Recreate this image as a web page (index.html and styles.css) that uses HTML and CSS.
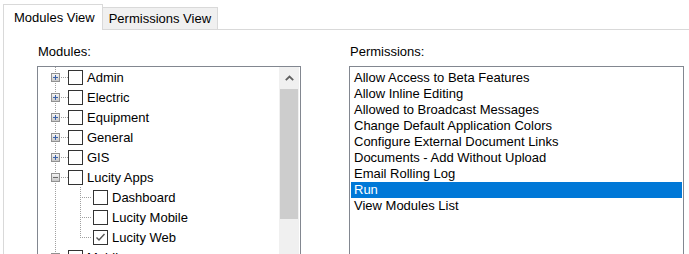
FILE: index.html
```html
<!DOCTYPE html>
<html lang="en">
<head>
  <meta charset="UTF-8">
  <title>Security Settings</title>
  <link rel="stylesheet" href="styles.css">
</head>
<body>
  <div class="tabs">
    <div class="tab active">Modules View</div>
    <div class="tab">Permissions View</div>
  </div>
  <div class="panel">
    <div class="column modules">
      <label class="caption">Modules:</label>
      <div class="box tree-box">
        <ul class="tree">
          <li class="node"><span class="gut"><span class="exp plus"></span></span><span class="dash"></span><span class="chk"></span><span class="txt">Admin</span></li>
          <li class="node"><span class="gut"><span class="exp plus"></span></span><span class="dash"></span><span class="chk"></span><span class="txt">Electric</span></li>
          <li class="node"><span class="gut"><span class="exp plus"></span></span><span class="dash"></span><span class="chk"></span><span class="txt">Equipment</span></li>
          <li class="node"><span class="gut"><span class="exp plus"></span></span><span class="dash"></span><span class="chk"></span><span class="txt">General</span></li>
          <li class="node"><span class="gut"><span class="exp plus"></span></span><span class="dash"></span><span class="chk"></span><span class="txt">GIS</span></li>
          <li class="node"><span class="gut"><span class="exp minus"></span></span><span class="dash"></span><span class="chk"></span><span class="txt">Lucity Apps</span></li>
          <li class="node child"><span class="gut"></span><span class="branch"></span><span class="chk"></span><span class="txt">Dashboard</span></li>
          <li class="node child"><span class="gut"></span><span class="branch"></span><span class="chk"></span><span class="txt">Lucity Mobile</span></li>
          <li class="node child"><span class="gut"></span><span class="branch last"></span><span class="chk checked"><svg width="13" height="13" viewBox="0 0 13 13"><path d="M2.5 6.5 L5 9 L10.5 3" fill="none" stroke="#555" stroke-width="1.4"/></svg></span><span class="txt">Lucity Web</span></li>
          <li class="node"><span class="gut"><span class="exp plus"></span></span><span class="dash"></span><span class="chk"></span><span class="txt">Mobile</span></li>
        </ul>
        <div class="scrollbar">
          <div class="arrow"><svg width="9" height="6" viewBox="0 0 9 6"><path d="M0.8 5.2 L4.5 1.5 L8.2 5.2" fill="none" stroke="#606060" stroke-width="1.8"/></svg></div>
          <div class="thumb"></div>
        </div>
      </div>
    </div>
    <div class="column permissions">
      <label class="caption">Permissions:</label>
      <ul class="box list">
        <li>Allow Access to Beta Features</li>
        <li>Allow Inline Editing</li>
        <li>Allowed to Broadcast Messages</li>
        <li>Change Default Application Colors</li>
        <li>Configure External Document Links</li>
        <li>Documents - Add Without Upload</li>
        <li>Email Rolling Log</li>
        <li class="selected">Run</li>
        <li>View Modules List</li>
      </ul>
    </div>
  </div>
</body>
</html>
```

FILE: styles.css
```css
* {
  box-sizing: border-box;
  margin: 0;
  padding: 0;
}
html, body {
  height: 100%;
  overflow: hidden;
}
body {
  background: white;
  font-family: "Liberation Sans", Arial, sans-serif;
  font-size: 13px;
  color: #000;
}
ul {
  list-style: none;
}
.tabs {
  display: flex;
  align-items: flex-end;
  padding: 3px 0 0 3px;
  height: 29px;
}
.tab {
  height: 22px;
  line-height: 21px;
  padding: 0 6px;
  background: #f0f0f0;
  border: 1px solid #d9d9d9;
  border-left: none;
  border-bottom: none;
}
.tab.active {
  height: 26px;
  line-height: 25px;
  padding: 0 7px 0 10px;
  background: white;
  border-left: 1px solid #d9d9d9;
  margin-bottom: -1px;
  position: relative;
  z-index: 1;
}
.panel {
  margin-left: 3px;
  border-top: 1px solid #d9d9d9;
  border-left: 1px solid #d9d9d9;
  height: 230px;
  display: flex;
  gap: 48px;
  padding: 14px 0 0 33px;
}
.column {
  display: flex;
  flex-direction: column;
}
.caption {
  line-height: 16px;
  padding-left: 1px;
  margin-bottom: 6px;
}
.box {
  border: 1px solid #828790;
  background: white;
  height: 200px;
}
.modules .box {
  width: 264px;
}
.permissions .box {
  width: 335px;
}
.tree-box {
  display: flex;
}
.tree {
  flex: 1;
  padding-left: 12px;
}
.node {
  display: flex;
  align-items: center;
  height: 20px;
  white-space: nowrap;
}
.gut {
  width: 11px;
  height: 20px;
  display: flex;
  align-items: center;
  justify-content: center;
  background: repeating-linear-gradient(to bottom, #a0a0a0 0 1px, transparent 1px 2px) no-repeat 5px 0 / 1px 100%;
}
.exp {
  width: 9px;
  height: 9px;
  border: 1px solid #919191;
  background: linear-gradient(to bottom, #f4f4f4, #c9c9c9);
  position: relative;
}
.exp::before,
.exp.plus::after {
  content: "";
  position: absolute;
  background: #3c62a8;
}
.exp::before {
  left: 1px;
  top: 3px;
  width: 5px;
  height: 1px;
}
.exp.plus::after {
  left: 3px;
  top: 1px;
  width: 1px;
  height: 5px;
}
.exp.minus::before {
  background: #6a6a6a;
}
.dash {
  width: 7px;
  height: 1px;
  background: repeating-linear-gradient(to right, #a0a0a0 0 1px, transparent 1px 2px);
}
.branch {
  width: 31px;
  height: 20px;
  margin-right: 1px;
  background:
    repeating-linear-gradient(to bottom, #a0a0a0 0 1px, transparent 1px 2px) no-repeat 19px 0 / 1px 100%,
    repeating-linear-gradient(to right, #a0a0a0 0 1px, transparent 1px 2px) no-repeat 19px 10px / 12px 1px;
}
.branch.last {
  background:
    repeating-linear-gradient(to bottom, #a0a0a0 0 1px, transparent 1px 2px) no-repeat 19px 0 / 1px 11px,
    repeating-linear-gradient(to right, #a0a0a0 0 1px, transparent 1px 2px) no-repeat 19px 10px / 12px 1px;
}
.chk {
  width: 15px;
  height: 15px;
  border: 1px solid #333;
  background: white;
  display: flex;
  align-items: center;
  justify-content: center;
}
.txt {
  padding-left: 4px;
}
.scrollbar {
  width: 20px;
  margin-right: 1px;
  background: #f0f0f0;
  display: flex;
  flex-direction: column;
}
.arrow {
  height: 22px;
  display: flex;
  align-items: center;
  justify-content: center;
}
.thumb {
  height: 130px;
  margin: 0 1px;
  background: #cdcdcd;
}
.list {
  padding: 3px 1px 0;
}
.list li {
  height: 16px;
  line-height: 16px;
  padding-left: 3px;
  white-space: nowrap;
}
.list li.selected {
  background: #0078d7;
  color: white;
}
```
